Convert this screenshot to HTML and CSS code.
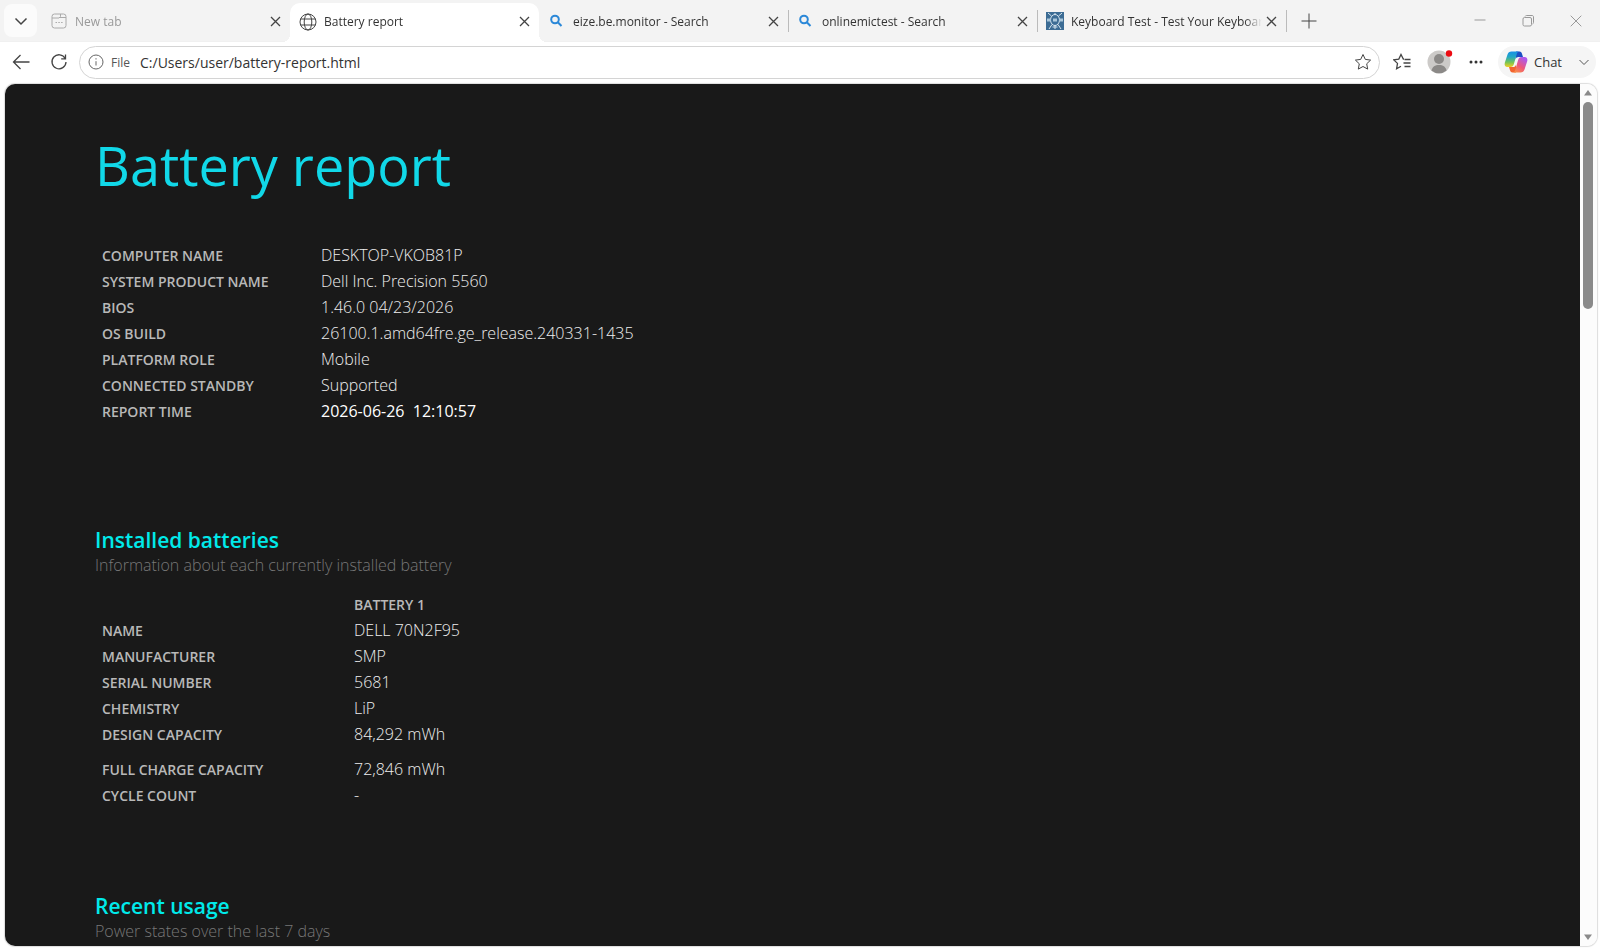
FILE: index.html
```html
<!DOCTYPE html>
<html lang="en">
<head>
  <meta charset="UTF-8">
  <meta name="viewport" content="width=device-width, initial-scale=1.0">
  <title>Battery report</title>
  <link rel="stylesheet" href="styles.css">
</head>
<body>
  <header class="tabstrip">
    <button class="tab-menu" aria-label="Tab actions"><svg width="14" height="14" viewBox="0 0 14 14"><path d="M1.5 4.5 7 10l5.500-5.500"/></svg></button>

    <div class="tab muted">
      <svg class="favicon" viewBox="0 0 18 18"><rect x="2" y="2" width="14" height="14" rx="2.500"/><path d="M2 6h7l1.500-1.500V2M10 5.500h6M5.500 10.500h1.500M8.300 10.500h1.500M11.100 10.500h1.500"/></svg>
      <button class="tab-title">New tab</button>
      <button class="close" aria-label="Close tab"><svg width="11" height="11" viewBox="0 0 11 11"><path d="m1 1 9 9M10 1l-9 9"/></svg></button>
    </div>

    <div class="tab active">
      <svg class="favicon" viewBox="0 0 18 18"><circle cx="9" cy="9" r="8"/><ellipse cx="9" cy="9" rx="3.800" ry="8"/><path d="M1.600 6h14.800M1.600 12h14.800"/></svg>
      <button class="tab-title">Battery report</button>
      <button class="close" aria-label="Close tab"><svg width="11" height="11" viewBox="0 0 11 11"><path d="m1 1 9 9M10 1l-9 9"/></svg></button>
    </div>

    <div class="tab">
      <svg class="favicon search" viewBox="0 0 18 18"><circle cx="7" cy="7.500" r="3.800"/><path d="m9.800 10.300 3.700 3.700"/></svg>
      <button class="tab-title">eize.be.monitor - Search</button>
      <button class="close" aria-label="Close tab"><svg width="11" height="11" viewBox="0 0 11 11"><path d="m1 1 9 9M10 1l-9 9"/></svg></button>
    </div>

    <div class="tab divided">
      <svg class="favicon search" viewBox="0 0 18 18"><circle cx="7" cy="7.500" r="3.800"/><path d="m9.800 10.300 3.700 3.700"/></svg>
      <button class="tab-title">onlinemictest - Search</button>
      <button class="close" aria-label="Close tab"><svg width="11" height="11" viewBox="0 0 11 11"><path d="m1 1 9 9M10 1l-9 9"/></svg></button>
    </div>

    <div class="tab divided">
      <svg class="favicon keys" viewBox="0 0 18 18"><path class="tile" d="M0 0h18v18H0z"/><ellipse cx="9" cy="8" rx="4.500" ry="5.500"/><path d="M2 1l3.500 3M16 1l-3.500 3M3 17l3-4.500M15 17l-3-4.500M9 13.500V17M9 1v1.500M6.500 15h5"/><path class="band" d="M1 8h4M7 8h4M13 8h4"/></svg>
      <button class="tab-title">Keyboard Test - Test Your Keyboard</button>
      <button class="close" aria-label="Close tab"><svg width="11" height="11" viewBox="0 0 11 11"><path d="m1 1 9 9M10 1l-9 9"/></svg></button>
    </div>

    <button class="new-tab divided" aria-label="New tab"><svg width="16" height="16" viewBox="0 0 16 16"><path d="M8 .5v15M.5 8h15"/></svg></button>

    <div class="window-controls">
      <button aria-label="Minimize"><svg width="12" height="12" viewBox="0 0 12 12"><path d="M.5 5h11"/></svg></button>
      <button aria-label="Restore"><svg width="12" height="12" viewBox="0 0 12 12"><rect x="1" y="2.500" width="8.500" height="8.500" rx="1.500"/><path d="M3 1.500c.4-.7.900-1 1.500-1H10c1 0 1.500.600 1.500 1.500v5.500c0 .7-.3 1.200-1 1.500"/></svg></button>
      <button aria-label="Close"><svg width="12" height="12" viewBox="0 0 12 12"><path d="m.7.7 10.600 10.600M11.300.7.7 11.300"/></svg></button>
    </div>
  </header>

  <nav class="toolbar">
    <button class="tool" aria-label="Back"><svg width="18" height="16" viewBox="0 0 18 16"><path d="M17.500 8H1.500M8.500 1l-7 7 7 7"/></svg></button>
    <button class="tool" aria-label="Refresh"><svg width="18" height="18" viewBox="0 0 18 18"><path d="M15.200 5.500A7 7 0 1 0 16 9M15.500 1.500v4.300h-4.300"/></svg></button>

    <div class="omnibox">
      <svg class="info-icon" width="16" height="16" viewBox="0 0 16 16"><circle cx="8" cy="8" r="7"/><path d="M8 7.200v4.300M8 4.200v1.300"/></svg>
      <label for="address">File</label>
      <input id="address" type="text" value="C:/Users/user/battery-report.html">
      <button class="star" aria-label="Add to favorites"><svg width="18" height="18" viewBox="0 0 18 18"><path d="m9 1.500 2.300 4.900 5.300.7-3.900 3.700 1 5.300L9 13.500l-4.700 2.600 1-5.300L1.400 7.100l5.300-.7z"/></svg></button>
    </div>

    <button class="tool favorites" aria-label="Favorites"><svg width="18" height="18" viewBox="0 0 18 18"><path d="M11 6 10.300 6.100 8 1.500 5.800 6.100.8 6.900l3.700 3.500-.9 5.300L8 13.300M11.500 6.500h6M10.500 10h7M11.500 13.500h6"/></svg></button>
    <button class="profile" aria-label="Profile"><svg width="24" height="24" viewBox="0 0 24 24"><circle cx="12" cy="12" r="11.500" fill="#cccac8"/><circle cx="12" cy="9" r="5" fill="#8b8987"/><path fill="#8b8987" d="M4.500 20.500C5.500 16.500 8 15 12 15s6.500 1.500 7.500 5.500a11.500 11.500 0 0 1-15 0z"/><circle cx="22" cy="3.500" r="3.200" fill="#ec0b12"/></svg></button>
    <button class="tool more" aria-label="Settings and more"><svg width="14" height="4" viewBox="0 0 14 4"><circle cx="2" cy="2" r="1.500"/><circle cx="7" cy="2" r="1.500"/><circle cx="12" cy="2" r="1.500"/></svg></button>

    <button class="chat">
      <svg width="24" height="24" viewBox="0 0 24 24">
        <defs>
          <linearGradient id="left" x1="0" y1="0" x2="0" y2="1"><stop offset="0" stop-color="#1690e6"/><stop offset=".35" stop-color="#23a7c4"/><stop offset=".7" stop-color="#78c355"/><stop offset="1" stop-color="#f2cf22"/></linearGradient>
          <linearGradient id="right" x1="0" y1="1" x2=".6" y2="0"><stop offset="0" stop-color="#fb9a3c"/><stop offset=".5" stop-color="#ef5778"/><stop offset="1" stop-color="#ad59ec"/></linearGradient>
        </defs>
        <path fill="#1c4fc4" d="M12 1.500h3.500c1.300 0 2 .8 2.400 2L19 7h-4.500c-1.500 0-2.500.8-3 2.300z"/>
        <path fill="#f3642f" d="M12 22.500H8.500c-1.300 0-2-.8-2.400-2L5 17h4c1.500 0 2.500-.8 3-2.300z"/>
        <path fill="url(#left)" d="M7.500 1.500h7.300c-1.200.4-1.700 1.300-2.100 2.700L9.900 14c-.6 2-1.500 3-3.400 3H3.600C1 17 .2 15.200.8 12.800L3.500 4.500C4.100 2.500 5.400 1.500 7.500 1.500z"/>
        <path fill="url(#right)" d="M16.500 22.500H9.200c1.200-.4 1.700-1.300 2.100-2.700L14.100 10c.6-2 1.500-3 3.400-3h2.900c2.600 0 3.400 1.800 2.800 4.200l-2.700 8.300c-.6 2-1.900 3-4 3z"/>
      </svg>
      <span>Chat</span>
      <svg class="chevron" width="12" height="12" viewBox="0 0 12 12"><path d="m1.500 4 4.500 4.500L10.500 4"/></svg>
    </button>
  </nav>

  <div class="viewport">
    <main class="report">
      <h1>Battery report</h1>

      <table class="system">
        <tr><th scope="row">COMPUTER NAME</th><td>DESKTOP-VKOB81P</td></tr>
        <tr><th scope="row">SYSTEM PRODUCT NAME</th><td>Dell Inc. Precision 5560</td></tr>
        <tr><th scope="row">BIOS</th><td>1.46.0 04/23/2026</td></tr>
        <tr><th scope="row">OS BUILD</th><td>26100.1.amd64fre.ge_release.240331-1435</td></tr>
        <tr><th scope="row">PLATFORM ROLE</th><td>Mobile</td></tr>
        <tr><th scope="row">CONNECTED STANDBY</th><td>Supported</td></tr>
        <tr><th scope="row">REPORT TIME</th><td class="time">2026-06-26&nbsp; 12:10:57</td></tr>
      </table>

      <h2>Installed batteries</h2>
      <p>Information about each currently installed battery</p>

      <table class="batteries">
        <thead>
          <tr><td></td><th scope="col">BATTERY 1</th></tr>
        </thead>
        <tbody>
          <tr><th scope="row">NAME</th><td>DELL 70N2F95</td></tr>
          <tr><th scope="row">MANUFACTURER</th><td>SMP</td></tr>
          <tr><th scope="row">SERIAL NUMBER</th><td>5681</td></tr>
          <tr><th scope="row">CHEMISTRY</th><td>LiP</td></tr>
          <tr><th scope="row">DESIGN CAPACITY</th><td>84,292 mWh</td></tr>
          <tr class="spaced"><th scope="row">FULL CHARGE CAPACITY</th><td>72,846 mWh</td></tr>
          <tr><th scope="row">CYCLE COUNT</th><td>-</td></tr>
        </tbody>
      </table>

      <h2>Recent usage</h2>
      <p>Power states over the last 7 days</p>
    </main>

    <div class="scrollbar">
      <svg width="8" height="6" viewBox="0 0 8 6"><path d="M4 0 8 5.500H0z"/></svg>
      <div class="track"><div class="thumb"></div></div>
      <svg width="8" height="6" viewBox="0 0 8 6"><path d="M0 .5h8L4 6z"/></svg>
    </div>
  </div>
</body>
</html>
```

FILE: styles.css
```css
* { box-sizing: border-box; }
body { margin: 0; height: 100vh; display: flex; flex-direction: column; overflow: hidden; background: #fff; color: #333; font-family: "Open Sans", "Noto Sans", sans-serif; font-size: 12px; }
button, input { font: inherit; color: inherit; border: 0; padding: 0; background: none; }
button { display: flex; align-items: center; justify-content: center; cursor: pointer; flex: none; }
svg { fill: none; stroke: #444; flex: none; }

/* tabs */
.tabstrip { display: flex; flex: none; height: 42px; padding-left: 4px; background: #f3f3f3; border-bottom: 1px solid #f0f0f0; }
.tab-menu { width: 33px; height: 33px; margin: 4px 4px 0 0; border-radius: 8px; background: #fbfbfb; }
.tab-menu svg { stroke-width: 1.5; }
.tab { display: flex; align-items: center; width: 249px; min-width: 0; padding: 1px 9px 0; position: relative; }
.tab.active { height: 39px; margin-top: 3px; padding-bottom: 3px; background: #fff; border-radius: 10px 10px 0 0; }
.tab.active::before, .tab.active::after { content: ""; position: absolute; bottom: 0; width: 8px; height: 8px; }
.tab.active::before { right: 100%; background: radial-gradient(circle at 0 0, transparent 8px, #fff 8px); }
.tab.active::after { left: 100%; background: radial-gradient(circle at 100% 0, transparent 8px, #fff 8px); }
.divided::before { content: ""; position: absolute; left: 0; top: 10px; height: 22px; border-left: 1px solid #bbb; }
.favicon { width: 18px; height: 18px; margin-right: 7px; }
.favicon.search { stroke: #2b88d8; stroke-width: 2; }
.favicon.keys { stroke: #d8e6f0; }
.keys .tile { fill: #3c6c94; stroke: none; }
.keys .band { stroke: #a9c6da; stroke-width: 3; }
.tab.muted { color: #999; }
.muted .favicon { stroke: #aaa; }
.tab-title { flex: 1; min-width: 0; display: block; text-align: left; overflow: hidden; white-space: nowrap; mask-image: linear-gradient(to right, #000 91%, transparent); }
.close { width: 18px; height: 22px; margin-right: -3px; }
.close svg { stroke-width: 1.3; }
.new-tab { position: relative; width: 45px; }
.window-controls { display: flex; margin-left: auto; }
.window-controls button { width: 48px; }
.window-controls svg { stroke: #999; }

/* toolbar */
.toolbar { display: flex; align-items: center; flex: none; height: 42px; padding: 0 4px 2px 2px; }
.tool { width: 38px; height: 32px; }
.tool svg { stroke-width: 1.3; }
.omnibox { display: flex; flex: 1; align-items: center; height: 33px; margin-left: 1px; padding: 0 7px 0 8px; border: 1px solid #d4d4d4; border-radius: 17px; }
.omnibox label { margin: 0 10px 0 7px; color: #555; }
.omnibox input { flex: 1; min-width: 0; font-size: 14px; outline: none; }
.info-icon { stroke: #666; }
.favorites { margin-left: 3px; }
.profile { width: 36px; }
.profile svg { stroke: none; overflow: visible; }
.more svg { fill: #333; stroke: none; }
.chat { height: 32px; margin-left: 3px; padding: 0 6px; border-radius: 16px; background: #f5f5f5; }
.chat svg { stroke: none; }
.chat .chevron { stroke: #555; }
.chat span { margin: 0 16px 0 6px; font-size: 13px; }

/* report page */
.viewport { display: flex; flex: 1; min-height: 0; margin: 0 3px 4px 5px; border-radius: 10px; overflow: hidden; box-shadow: 0 0 1px 1px #ddd; }
.report { flex: 1; padding: 41px 90px 0; overflow: hidden; background: #191919; color: #eee; }
h1 { margin: 0; color: #11d8e8; font-size: 54px; font-weight: 400; line-height: 80px; }
h2 { margin: 0; color: #00eaea; font-size: 21px; font-weight: 600; line-height: 28px; }
.report p { margin: 0; color: #777; font-size: 16px; font-weight: 300; line-height: 22px; }
table { border-collapse: collapse; }
th, td { height: 26px; padding: 0; text-align: left; white-space: nowrap; }
th { color: #b8b8b8; font-size: 14px; font-weight: 600; }
td { font-size: 16px; font-weight: 300; }
th:first-child { padding-left: 7px; }
.system { margin: 37px 0 102px; }
.system th { width: 226px; }
.system .time { color: #fff; font-weight: 400; }
.batteries { margin: 16px 0 84px; }
.batteries thead th, .batteries thead td { height: 25px; }
.batteries th:first-child { width: 259px; }
.batteries .spaced > * { height: 35px; padding-top: 9px; }
.scrollbar { display: flex; flex-direction: column; align-items: center; width: 17px; padding: 6px 1px 6px 0; background: #fcfcfc; }
.scrollbar svg { fill: #8a8a8a; stroke: none; }
.track { flex: 1; width: 10px; padding: 6px 0; }
.thumb { height: 25%; border-radius: 5px; background: #8a8a8a; }
```
